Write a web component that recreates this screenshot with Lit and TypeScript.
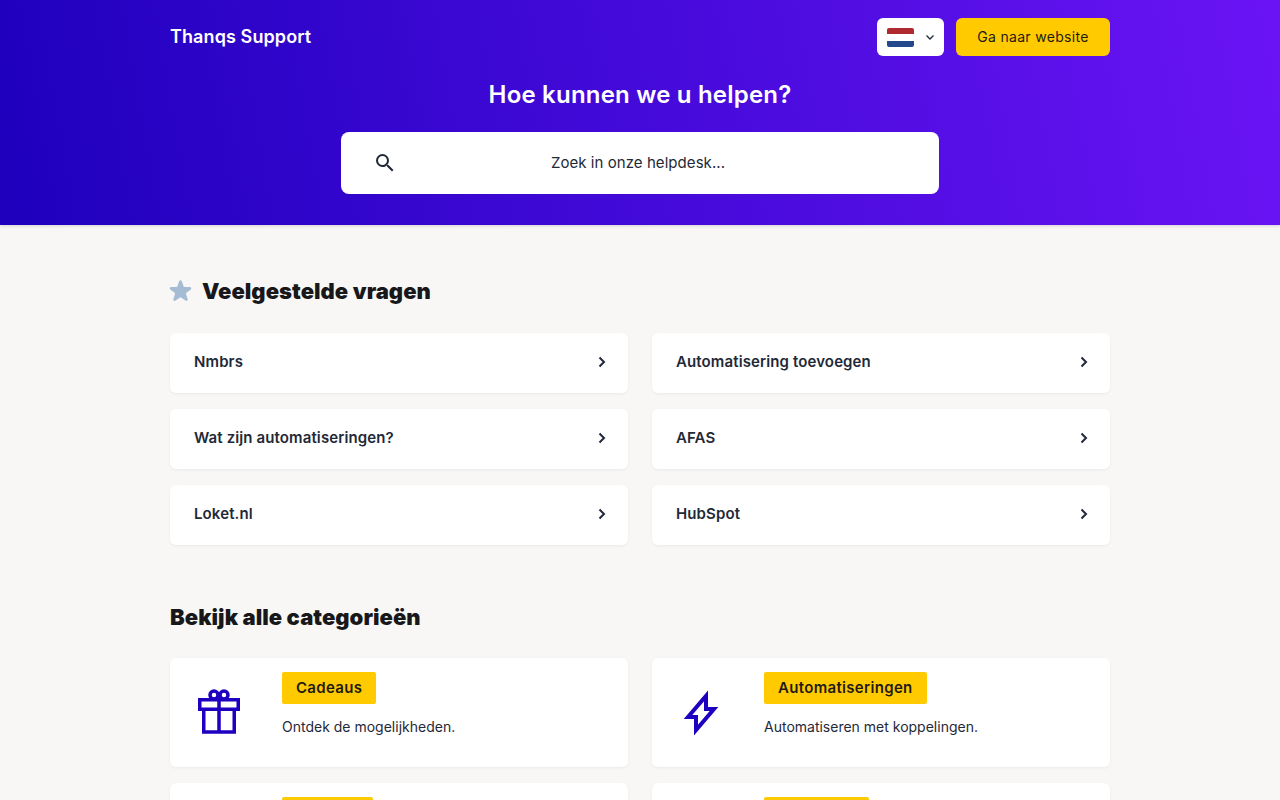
import { LitElement, html, css, svg } from 'lit';
import { customElement } from 'lit/decorators.js';

const faqs = [
  'Nmbrs',
  'Automatisering toevoegen',
  'Wat zijn automatiseringen?',
  'AFAS',
  'Loket.nl',
  'HubSpot',
];

const giftIcon = svg`<svg class="cat-icon" viewBox="0 0 50 50" fill="none" stroke="#1e00c0" stroke-width="3.500">
  <path d="M5.750 11.750h38.500v9.500H5.750zM9.750 21.250V44h30.500V21.250M25 11.750V44" />
  <circle cx="20" cy="7" r="4" />
  <circle cx="30" cy="7" r="4" />
</svg>`;

const boltIcon = svg`<svg class="cat-icon" viewBox="0 0 50 50" fill="none" stroke="#1e00c0" stroke-width="4">
  <path d="M30 8v13h8L20 42V29h-8z" />
</svg>`;

// the last row is cut off by the window, only the top of its badges shows
const categories = [
  { title: 'Cadeaus', text: 'Ontdek de mogelijkheden.', icon: giftIcon },
  { title: 'Automatiseringen', text: 'Automatiseren met koppelingen.', icon: boltIcon },
  { title: '', text: '', icon: null, badgeWidth: 91 },
  { title: '', text: '', icon: null, badgeWidth: 105 },
];

@customElement('app-root')
export class AppRoot extends LitElement {
  static styles = css`
    :host {
      display: block;
      height: 800px;
      overflow: hidden;
      background: #f8f7f6;
      font-family: Inter, 'Liberation Sans', sans-serif;
      color: #1f2937;
    }

    .hero {
      height: 225px;
      box-sizing: border-box;
      padding-top: 18px;
      background: linear-gradient(80deg, #1e00bd 0%, #6a14f5 100%);
      box-shadow: 0 1px 3px rgba(0, 0, 0, 0.15);
    }

    .wrap {
      width: 940px;
      margin: 0 auto;
    }

    .topbar {
      display: flex;
      align-items: center;
      height: 38px;
    }

    .brand {
      flex: 1;
      padding-bottom: 1px;
      font-size: 18px;
      font-weight: 600;
      letter-spacing: 0.1px;
      color: #fff;
    }

    .lang {
      display: flex;
      align-items: center;
      box-sizing: border-box;
      width: 67px;
      height: 38px;
      padding-left: 10px;
      margin-right: 12px;
      background: #fff;
      border-radius: 6px;
    }

    .flag {
      width: 27px;
      height: 19px;
      border-radius: 2px;
      overflow: hidden;
      background: linear-gradient(#ae2a2f 0 33%, #fff 33% 67%, #25478b 67%);
    }

    .lang svg {
      width: 12px;
      height: 12px;
      margin-left: 10px;
    }

    .site-btn {
      display: flex;
      align-items: center;
      justify-content: center;
      box-sizing: border-box;
      width: 154px;
      height: 38px;
      padding-bottom: 2px;
      background: #ffcb00;
      border-radius: 6px;
      font-size: 14px;
      letter-spacing: 0.32px;
      color: #1f1a14;
    }

    h1 {
      margin: 20px 0 0;
      font-size: 24px;
      line-height: 38px;
      font-weight: 600;
      letter-spacing: 0.2px;
      text-align: center;
      color: #fff;
    }

    .search {
      position: relative;
      display: flex;
      align-items: center;
      justify-content: center;
      box-sizing: border-box;
      width: 598px;
      height: 62px;
      padding: 0 4px 2px 0;
      margin: 18px auto 0;
      background: #fff;
      border-radius: 8px;
      font-size: 15px;
      letter-spacing: 0.06px;
      color: #1f2937;
    }

    .search svg {
      position: absolute;
      left: 32px;
      top: 19px;
      width: 24px;
      height: 24px;
    }

    h2 {
      display: flex;
      align-items: center;
      gap: 10px;
      margin: 0;
      font-size: 22px;
      line-height: 32px;
      font-weight: 900;
      letter-spacing: 0.05px;
      color: #18181b;
    }

    h2 svg {
      width: 29px;
      height: 29px;
      margin: 0 -3px 0 -4px;
    }

    .faq-title {
      margin-top: 50px;
    }

    .cat-title {
      margin-top: 56px;
    }

    .grid {
      display: grid;
      grid-template-columns: 458px 458px;
      gap: 16px 24px;
      margin-top: 26px;
    }

    .cat-title + .grid {
      margin-top: 25px;
    }

    .card {
      background: #fff;
      border-radius: 6px;
      box-shadow: 0 1px 3px rgba(0, 0, 0, 0.06);
    }

    .faq {
      display: flex;
      align-items: center;
      justify-content: space-between;
      height: 60px;
      box-sizing: border-box;
      padding: 0 18px 3px 24px;
      font-size: 15px;
      font-weight: 600;
      letter-spacing: 0.12px;
    }

    .faq svg {
      width: 16px;
      height: 16px;
    }

    .cat {
      display: flex;
      height: 109px;
      box-sizing: border-box;
      padding: 14px 0 0 24px;
    }

    .cat-icon {
      display: block;
      width: 50px;
      height: 50px;
      margin-top: 16px;
    }

    .icon-slot {
      width: 50px;
      margin-right: 38px;
    }

    .badge {
      display: inline-block;
      min-height: 32px;
      padding: 0 14px;
      box-sizing: border-box;
      line-height: 32px;
      background: #ffcb00;
      border-radius: 2px;
      font-size: 15px;
      font-weight: 600;
      letter-spacing: 0.32px;
      color: #1f1a14;
    }

    .cat p {
      margin: 13px 0 0;
      font-size: 14px;
      line-height: 20px;
    }
  `;

  render() {
    return html`
      <header class="hero">
        <div class="wrap">
          <div class="topbar">
            <div class="brand">Thanqs Support</div>
            <div class="lang">
              <div class="flag"></div>
              <svg viewBox="0 0 12 12" fill="none" stroke="#1f2937" stroke-width="1.300">
                <path d="M2.500 4.500 6 8l3.500-3.500" />
              </svg>
            </div>
            <div class="site-btn">Ga naar website</div>
          </div>
          <h1>Hoe kunnen we u helpen?</h1>
          <div class="search">
            <svg viewBox="0 0 24 24" fill="#1f2937">
              <path d="M15.500 14h-.79l-.28-.27A6.470 6.470 0 0 0 16 9.500 6.500 6.500 0 1 0 9.500 16c1.610 0 3.090-.59 4.230-1.570l.27.28v.79l5 4.990L20.490 19l-4.990-5zm-6 0C7.010 14 5 11.990 5 9.500S7.010 5 9.500 5 14 7.010 14 9.500 11.990 14 9.500 14z" />
            </svg>
            Zoek in onze helpdesk...
          </div>
        </div>
      </header>
      <main class="wrap">
        <h2 class="faq-title">
          <svg viewBox="0 0 20 20" fill="#a6bcd4">
            <path d="M9.049 2.927c.3-.921 1.603-.921 1.902 0l1.070 3.292a1 1 0 0 0 .950.690h3.462c.969 0 1.371 1.240.588 1.810l-2.800 2.034a1 1 0 0 0-.364 1.118l1.070 3.292c.3.921-.755 1.688-1.540 1.118l-2.800-2.034a1 1 0 0 0-1.175 0l-2.800 2.034c-.784.570-1.838-.197-1.539-1.118l1.070-3.292a1 1 0 0 0-.364-1.118L2.980 8.720c-.783-.570-.380-1.810.588-1.810h3.461a1 1 0 0 0 .951-.690l1.070-3.292z" />
          </svg>
          Veelgestelde vragen
        </h2>
        <div class="grid">
          ${faqs.map(
            (faq) => html`
              <div class="card faq">
                ${faq}
                <svg viewBox="0 0 16 16" fill="none" stroke="#1f2937" stroke-width="2">
                  <path d="M5.500 3.500 10 8l-4.500 4.500" />
                </svg>
              </div>
            `
          )}
        </div>
        <h2 class="cat-title">Bekijk alle categorieën</h2>
        <div class="grid">
          ${categories.map(
            (cat) => html`
              <div class="card cat">
                <div class="icon-slot">${cat.icon}</div>
                <div>
                  <span class="badge" style=${cat.badgeWidth ? `width: ${cat.badgeWidth}px` : ''}>${cat.title}</span>
                  <p>${cat.text}</p>
                </div>
              </div>
            `
          )}
        </div>
      </main>
    `;
  }
}
